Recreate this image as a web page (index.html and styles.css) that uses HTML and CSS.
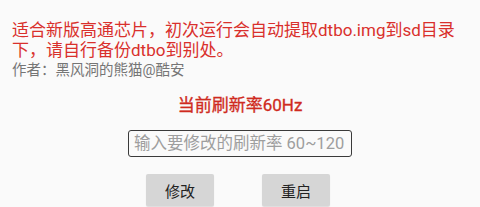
FILE: index.html
```html
<html>
<head>
	<meta charset="utf-8">
	<title>刷新率</title>
	<link rel="stylesheet" href="styles.css">
</head>
<body>
	<div class="notice">适合新版高通芯片，初次运行会自动提取dtbo.img到sd目录下，请自行备份dtbo到别处。</div>
	<div class="author">作者：黑风洞的熊猫@酷安</div>
	<div class="current">当前刷新率60Hz</div>
	<div class="field">
		<input type="text" class="rate" placeholder="输入要修改的刷新率 60~120">
	</div>
	<div class="buttons">
		<button class="btn">修改</button>
		<button class="btn">重启</button>
	</div>
</body>
</html>
```

FILE: styles.css
```css
body{
	margin:0;
	background:#fafafa;
	font-family: Roboto, "Noto Sans CJK SC", sans-serif;
	width:480px;
	height:207px;
	overflow:hidden;
}
.notice{
	color:#d9302c;
	font-size:17px;
	line-height:20px;
	padding:20px 12px 0 12px;
}
.author{
	color:#757575;
	font-size:14.5px;
	line-height:20px;
	margin-top:1px;
	padding:0 12px;
}
.current{
	color:#cf2a20;
	font-size:17px;
	line-height:20px;
	text-align:center;
	margin-top:14px;
	-webkit-text-stroke:0.3px #cf2a20;
}
.field{
	display:flex;
	justify-content:center;
	margin-top:15px;
}
.rate{
	width:224px;
	height:27px;
	box-sizing:border-box;
	border:1px solid #3a3a3a;
	border-radius:3px;
	background:#fafafa;
	font-family: Roboto, "Noto Sans CJK SC", sans-serif;
	font-size:16.5px;
	padding:0 3px 0 5px;
	outline:none;
}
.rate::placeholder{
	color:#9e9e9e;
}
.buttons{
	display:flex;
	justify-content:center;
	gap:48px;
	margin-top:17px;
	padding-right:4px;
}
.btn{
	width:68px;
	height:32px;
	border:0;
	border-radius:2px;
	background:#d6d6d6;
	color:#222;
	font-family: Roboto, "Noto Sans CJK SC", sans-serif;
	font-size:15px;
	box-shadow:0 1px 1px rgba(0,0,0,0.12);
}
```
